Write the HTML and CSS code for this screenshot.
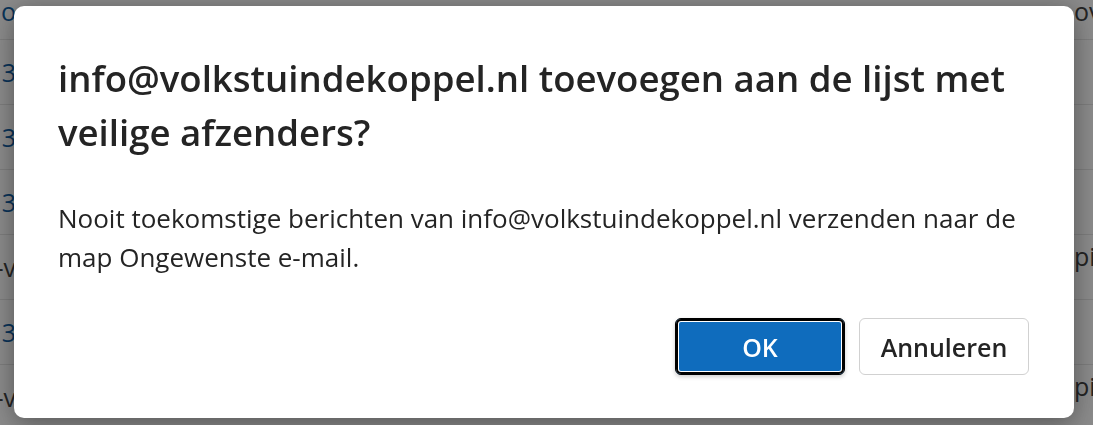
FILE: index.html
```html
<!DOCTYPE html>
<html lang="nl">
<head>
  <meta charset="UTF-8" />
  <meta name="viewport" content="width=device-width, initial-scale=1.0" />
  <title>Veilige afzenders</title>
  <link rel="stylesheet" href="styles.css">
</head>
<body>
  <!-- berichtenlijst op de achtergrond -->
  <div class="mail-list">
    <div class="mail-row first">
      <span class="lead blue">n o</span>
      <span class="tail">over</span>
    </div>
    <div class="mail-row"><span class="lead blue">13</span><span class="tail"></span></div>
    <div class="mail-row"><span class="lead blue">13</span><span class="tail"></span></div>
    <div class="mail-row"><span class="lead blue">13</span><span class="tail"></span></div>
    <div class="mail-row"><span class="lead">e-v</span><span class="tail up">pieter</span></div>
    <div class="mail-row"><span class="lead blue">13</span><span class="tail"></span></div>
    <div class="mail-row"><span class="lead">e-v</span><span class="tail up">pieter</span></div>
  </div>

  <div class="overlay">
    <div class="dialog" role="dialog" aria-labelledby="dialogTitle">
      <h2 id="dialogTitle" class="dialog-title">info@volkstuindekoppel.nl toevoegen aan de lijst met veilige afzenders?</h2>
      <p class="dialog-text">Nooit toekomstige berichten van info@volkstuindekoppel.nl verzenden naar de map Ongewenste e-mail.</p>
      <div class="dialog-actions">
        <button class="btn btn-primary">OK</button>
        <button class="btn">Annuleren</button>
      </div>
    </div>
  </div>
</body>
</html>
```

FILE: styles.css
```css
/* Basis */
body {
  margin: 0;
  font-family: "Open Sans", "Noto Sans", sans-serif;
  color: #242424;
  background: #ffffff;
  overflow: hidden;
}

/* Lijst met berichten achter de dialoog */
.mail-list {
  height: 425px;
}
.mail-row {
  display: flex;
  justify-content: space-between;
  align-items: center;
  height: 64px;
  border-bottom: 1px solid #e6e6e6;
  font-size: 25px;
  color: #424242;
}
.mail-row.first {
  height: 39px;
  align-items: flex-start;
  line-height: 22px;
}
.lead, .tail {
  display: flex;
  width: 16px;
  overflow: hidden;
  white-space: nowrap;
}
.lead {
  justify-content: flex-end;
}
.tail {
  width: 19px;
}
.tail.up {
  margin-bottom: 22px;
}
.blue {
  color: #115ea3;
}

/* Donkere laag met dialoog */
.overlay {
  position: fixed;
  inset: 0;
  background: rgba(0, 0, 0, 0.46);
  display: flex;
  align-items: flex-start;
  padding: 6px 19px 0 14px;
}
.dialog {
  flex: 1;
  background: #ffffff;
  border-radius: 10px;
  padding: 45px 45px 43px 44px;
  box-shadow: 0 0 24px rgba(0, 0, 0, 0.22), 0 12px 28px rgba(0, 0, 0, 0.2);
}
.dialog-title {
  margin: 0;
  font-size: 36.6px;
  font-weight: 600;
  line-height: 54px;
}
.dialog-text {
  margin: 40px 0 0;
  font-size: 26px;
  line-height: 39px;
}

/* Knoppen */
.dialog-actions {
  display: flex;
  justify-content: flex-end;
  gap: 14px;
  margin-top: 41px;
}
.btn {
  width: 170px;
  height: 57px;
  border: 1px solid #d1d1d1;
  border-radius: 6px;
  background: #ffffff;
  color: #242424;
  font-family: inherit;
  font-size: 25px;
  font-weight: 600;
  cursor: pointer;
}
.btn-primary {
  background: #0f6cbd;
  color: #ffffff;
  border: 1px solid #000000;
  box-shadow: inset 0 0 0 2px #000000, inset 0 0 0 3px #ffffff, 0 2px 4px rgba(0, 0, 0, 0.2);
}
```
